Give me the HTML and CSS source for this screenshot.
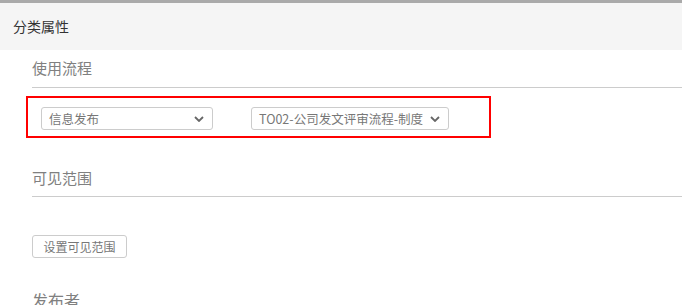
FILE: index.html
```html
<!DOCTYPE html>
<html lang="zh-CN">
<head>
    <meta charset="UTF-8">
    <title>分类属性</title>
    <link rel="stylesheet" href="styles.css">
</head>
<body>
    <div class="panel">
        <div class="panel-head">分类属性</div>
        <div class="panel-body">
            <div class="sec-title">使用流程</div>
            <div class="flow-box">
                <div class="select sel-type">
                    <span>信息发布</span>
                    <svg class="chev" width="10" height="6" viewBox="0 0 10 6"><path d="M1 1 L5 5 L9 1" fill="none" stroke="#666" stroke-width="1.8"/></svg>
                </div>
                <div class="select sel-flow">
                    <span>TO02-公司发文评审流程-制度</span>
                    <svg class="chev" width="10" height="6" viewBox="0 0 10 6"><path d="M1 1 L5 5 L9 1" fill="none" stroke="#666" stroke-width="1.8"/></svg>
                </div>
            </div>
            <div class="sec-title sec-gap">可见范围</div>
            <button class="btn">设置可见范围</button>
            <div class="sec-title sec-last">发布者</div>
        </div>
    </div>
</body>
</html>
```

FILE: styles.css
```css
body {
    margin: 0;
    font-family: "Noto Sans CJK SC", "Liberation Sans", sans-serif;
    background: #fff;
    overflow: hidden;
}
.panel {
    border-top: 3px solid #aaa;
}
.panel-head {
    height: 47px;
    line-height: 46px;
    padding-left: 13px;
    background: #f5f5f5;
    font-size: 14px;
    color: #333;
}
.panel-body {
    padding-left: 32px;
}
.sec-title {
    padding: 6px 0 7px;
    line-height: 24px;
    font-size: 15px;
    color: #808080;
    border-bottom: 1px solid #ccc;
}
.sec-gap {
    margin-top: 20px;
    padding: 8px 0 6px;
}
.sec-last {
    margin-top: 30px;
    padding: 0;
    border-bottom: none;
    font-size: 16px;
}
.flow-box {
    margin: 8px 0 0 -6px;
    width: 448px;
    height: 29px;
    border: 2px solid #f00;
    padding: 9px 0 0 13px;
    display: flex;
    gap: 38px;
}
.select {
    box-sizing: border-box;
    height: 23px;
    border: 1px solid #ccc;
    border-radius: 3px;
    display: flex;
    align-items: center;
    justify-content: space-between;
    padding: 0 8px 0 7px;
    font-size: 12.5px;
    color: #777;
}
.sel-type {
    width: 172px;
}
.sel-flow {
    width: 198px;
}
.btn {
    display: block;
    margin-top: 38px;
    width: 95px;
    height: 23px;
    padding: 0;
    border: 1px solid #ccc;
    border-radius: 3px;
    background: #fff;
    font-family: inherit;
    font-size: 12px;
    color: #777;
}
```
